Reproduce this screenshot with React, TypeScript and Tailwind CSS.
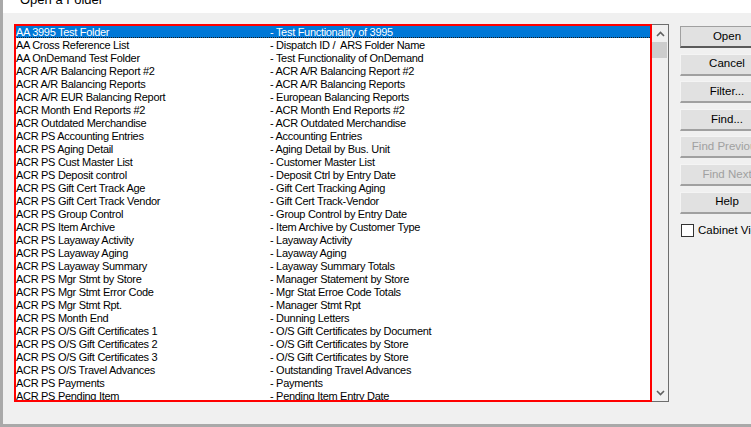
import React from "react";

const rows: [string, string][] = [
  ["AA 3995 Test Folder", "- Test Functionality of 3995"],
  ["AA Cross Reference List", "- Dispatch ID /  ARS Folder Name"],
  ["AA OnDemand Test Folder", "- Test Functionality of OnDemand"],
  ["ACR A/R Balancing Report #2", "- ACR A/R Balancing Report #2"],
  ["ACR A/R Balancing Reports", "- ACR A/R Balancing Reports"],
  ["ACR A/R EUR Balancing Report", "- European Balancing Reports"],
  ["ACR Month End Reports #2", "- ACR Month End Reports #2"],
  ["ACR Outdated Merchandise", "- ACR Outdated Merchandise"],
  ["ACR PS Accounting Entries", "- Accounting Entries"],
  ["ACR PS Aging Detail", "- Aging Detail by Bus. Unit"],
  ["ACR PS Cust Master List", "- Customer Master List"],
  ["ACR PS Deposit control", "- Deposit Ctrl by Entry Date"],
  ["ACR PS Gift Cert Track Age", "- Gift Cert Tracking Aging"],
  ["ACR PS Gift Cert Track Vendor", "- Gift Cert Track-Vendor"],
  ["ACR PS Group Control", "- Group Control by Entry Date"],
  ["ACR PS Item Archive", "- Item Archive by Customer Type"],
  ["ACR PS Layaway Activity", "- Layaway Activity"],
  ["ACR PS Layaway Aging", "- Layaway Aging"],
  ["ACR PS Layaway Summary", "- Layaway Summary Totals"],
  ["ACR PS Mgr Stmt by Store", "- Manager Statement by Store"],
  ["ACR PS Mgr Stmt Error Code", "- Mgr Stat Erroe Code Totals"],
  ["ACR PS Mgr Stmt Rpt.", "- Manager Stmt Rpt"],
  ["ACR PS Month End", "- Dunning Letters"],
  ["ACR PS O/S Gift Certificates 1", "- O/S Gift Certificates by Document"],
  ["ACR PS O/S Gift Certificates 2", "- O/S Gift Certificates by Store"],
  ["ACR PS O/S Gift Certificates 3", "- O/S Gift Certificates by Store"],
  ["ACR PS O/S Travel Advances", "- Outstanding Travel Advances"],
  ["ACR PS Payments", "- Payments"],
  ["ACR PS Pending Item", "- Pending Item Entry Date"],
];

const buttons = [
  { label: "Open", primary: true },
  { label: "Cancel" },
  { label: "Filter..." },
  { label: "Find..." },
  { label: "Find Previous", disabled: true },
  { label: "Find Next", disabled: true },
  { label: "Help" },
];

function Chevron({ up }: { up?: boolean }) {
  return (
    <svg width="9" height="6" viewBox="0 0 9 6" className="block">
      <path
        d={up ? "M1 5 L4.5 1.5 L8 5" : "M1 1 L4.5 4.5 L8 1"}
        fill="none"
        stroke="#606060"
        strokeWidth="1.6"
      />
    </svg>
  );
}

export default function App() {
  return (
    <div
      className="w-[751px] h-[427px] overflow-hidden flex flex-col bg-[#f0f0f0] border-l-[3px] border-b-[3px] border-[#a9a9a9] text-black"
      style={{ fontFamily: '"Liberation Sans", Arial, sans-serif' }}
    >
      {/* title strip */}
      <div className="h-[13px] bg-white overflow-hidden shrink-0">
        <div className="ml-[17px] -mt-[8px] text-[13px] leading-[16px]">Open a Folder</div>
      </div>

      <div className="flex pt-[11px] pl-[11px]">
        {/* list box */}
        <div className="flex h-[378px]">
          <div className="w-[638px] h-[378px] pt-[1px] bg-white overflow-hidden outline-2 outline-solid outline-[#ff0000] -outline-offset-2">
            {rows.map(([name, desc], i) => (
              <div
                key={name}
                className={
                  "flex h-[13px] pl-[2px] text-[11px] leading-[14px] tracking-[-0.3px] whitespace-pre " +
                  (i === 0 ? "bg-[#0078d7] text-white border-b border-dotted border-[#1a1a1a]" : "")
                }
              >
                <span className="w-[254px] shrink-0">{name}</span>
                <span>{desc}</span>
              </div>
            ))}
          </div>
          {/* scrollbar */}
          <div className="w-[17px] h-[378px] flex flex-col border-t border-r border-b border-[#6d6d6d] bg-[#f0f0f0]">
            <div className="h-[17px] flex items-center justify-center">
              <Chevron up />
            </div>
            <div className="h-[16px] w-[15px] bg-[#cdcdcd]" />
            <div className="flex-1" />
            <div className="h-[17px] flex items-center justify-center">
              <Chevron />
            </div>
          </div>
        </div>

        {/* buttons */}
        <div className="ml-[11px] pt-[2px] flex flex-col gap-[5.6px]">
          {buttons.map((b) => (
            <div
              key={b.label}
              className={
                "w-[95px] h-[22px] flex items-center justify-center bg-[#e1e1e1] text-[11.5px] whitespace-nowrap " +
                (b.primary
                  ? "border-t border-l border-[#a0a0a0] border-b-2 border-r-2 border-b-[#5a5a5a] border-r-[#5a5a5a]"
                  : "border-t border-l border-[#f4f4f4] border-b-2 border-r-2 border-b-[#a0a0a0] border-r-[#a0a0a0]") +
                (b.disabled ? " text-[#a0a0a0]" : "")
              }
            >
              {b.label}
            </div>
          ))}
          <div className="flex items-center mt-[3px] text-[11.5px] whitespace-nowrap">
            <div className="w-[13px] h-[13px] ml-[1px] bg-white border border-[#333]" />
            <span className="ml-[4px]">Cabinet View</span>
          </div>
        </div>
      </div>
    </div>
  );
}
